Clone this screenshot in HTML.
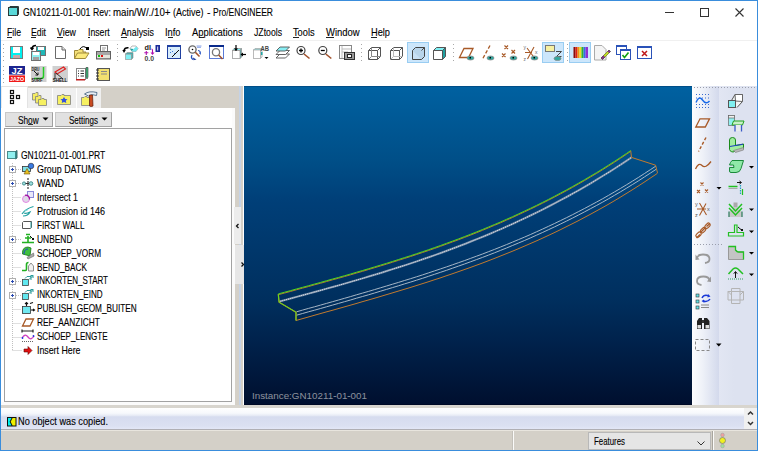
<!DOCTYPE html>
<html><head><meta charset="utf-8">
<style>
*{margin:0;padding:0;box-sizing:border-box}
html,body{width:758px;height:451px;overflow:hidden;background:#fff;font-family:"Liberation Sans",sans-serif}
.a{position:absolute}
.t{position:absolute;white-space:pre;transform-origin:0 0;-webkit-text-stroke:0.12px currentColor;font-family:"Liberation Sans",sans-serif}
svg{position:absolute;overflow:visible}
</style></head><body>
<div class="a" style="left:0;top:0;width:758px;height:451px;background:#fff"></div>
<!-- menu separator -->
<div class="a" style="left:1px;top:40px;width:756px;height:1px;background:#f0f0f0"></div>
<!-- tab strip gray -->
<div class="a" style="left:1px;top:86px;width:243px;height:22px;background:#d4d0c8"></div>
<!-- active tab -->
<div class="a" style="left:1px;top:86px;width:27px;height:24px;background:#fff;border-top:1px solid #e3e3e3;border-left:1px solid #ececec;border-right:1px solid #e3e3e3"></div>
<div class="a" style="left:28px;top:88px;width:24px;height:20px;background:#efefef"></div>
<div class="a" style="left:52px;top:88px;width:24px;height:20px;background:#efefef;border-left:1px solid #fff"></div>
<div class="a" style="left:76px;top:88px;width:25px;height:20px;background:#efefef;border-left:1px solid #fff"></div>
<!-- left panel white below tabs -->
<div class="a" style="left:1px;top:108px;width:233px;height:298px;background:#fff"></div>
<!-- buttons -->
<div class="a" style="left:5px;top:112px;width:48px;height:15px;background:#e1e1e1;border:1px solid #c8c8c8;border-right-color:#a0a0a0;border-bottom-color:#a0a0a0"></div>
<div class="a" style="left:55px;top:112px;width:57px;height:15px;background:#e1e1e1;border:1px solid #c8c8c8;border-right-color:#a0a0a0;border-bottom-color:#a0a0a0"></div>
<!-- tree box -->
<div class="a" style="left:4px;top:128px;width:228px;height:274px;background:#fff;border:1px solid #a2a2a2"></div>
<!-- panel right strip / splitter -->
<div class="a" style="left:232px;top:108px;width:12px;height:298px;background:#d4d0c8"></div>
<div class="a" style="left:232px;top:108px;width:3px;height:297px;background:#fbfbfb"></div><div class="a" style="left:1px;top:402px;width:234px;height:3px;background:#fbfbfb"></div>
<div class="a" style="left:239px;top:86px;width:2px;height:320px;background:#c4d2e6"></div>
<div class="a" style="left:243px;top:86px;width:1px;height:320px;background:#fff"></div>
<div class="a" style="left:234px;top:207px;width:7px;height:37px;background:#ececec"></div>
<div class="a" style="left:235px;top:245px;width:9px;height:39px;background:#e6e6e6"></div>
<!-- viewport -->
<div class="a" style="left:244px;top:86px;width:448px;height:319px;background:linear-gradient(#0061a1,#004f88 23%,#003f78 36%,#002f5e 67%,#00224c 80%,#000f2e)"></div>
<div class="a" style="left:244px;top:86px;width:448px;height:1px;background:#004e88"></div><div class="a" style="left:244px;top:404px;width:448px;height:1px;background:#000a26"></div>
<svg class="a" width="758" height="451" style="left:0;top:0">
<g fill="none" stroke-linejoin="round">
<polyline points="279.5,301.5 285.5,299.9 291.5,298.3 297.5,296.6 303.5,295.0 309.5,293.4 315.5,291.7 321.5,290.1 327.5,288.4 333.5,286.8 339.5,285.1 345.5,283.4 351.5,281.6 357.5,279.9 363.5,278.1 369.5,276.3 375.5,274.5 381.5,272.7 387.5,270.8 393.5,268.9 399.5,267.0 405.5,265.1 411.5,263.1 417.5,261.1 423.5,259.0 429.5,257.0 435.5,254.9 441.5,252.7 447.5,250.5 453.5,248.3 459.5,246.0 465.5,243.7 471.5,241.3 477.5,238.9 483.5,236.5 489.5,234.0 495.5,231.4 501.5,228.8 507.5,226.2 513.5,223.5 519.5,220.7 525.5,217.9 531.5,215.0 537.5,212.1 543.5,209.1 549.5,206.0 555.5,202.9 561.5,199.7 567.5,196.5 573.5,193.2 579.5,189.8 585.5,186.3 591.5,182.8 597.5,179.2 603.5,175.5 609.5,171.8 615.5,168.0 621.5,164.1 627.5,160.1 631.5,157.4" stroke="#7d90a8" stroke-width="2"/>
<polyline points="279.5,301.5 285.5,299.9 291.5,298.3 297.5,296.6 303.5,295.0 309.5,293.4 315.5,291.7 321.5,290.1 327.5,288.4 333.5,286.8 339.5,285.1 345.5,283.4 351.5,281.6 357.5,279.9 363.5,278.1 369.5,276.3 375.5,274.5 381.5,272.7 387.5,270.8 393.5,268.9 399.5,267.0 405.5,265.1 411.5,263.1 417.5,261.1 423.5,259.0 429.5,257.0 435.5,254.9 441.5,252.7 447.5,250.5 453.5,248.3 459.5,246.0 465.5,243.7 471.5,241.3 477.5,238.9 483.5,236.5 489.5,234.0 495.5,231.4 501.5,228.8 507.5,226.2 513.5,223.5 519.5,220.7 525.5,217.9 531.5,215.0 537.5,212.1 543.5,209.1 549.5,206.0 555.5,202.9 561.5,199.7 567.5,196.5 573.5,193.2 579.5,189.8 585.5,186.3 591.5,182.8 597.5,179.2 603.5,175.5 609.5,171.8 615.5,168.0 621.5,164.1 627.5,160.1 631.5,157.4" stroke="#d8e0e8" stroke-width="1" stroke-dasharray="1.2,1"/>
<polyline points="296.5,311.8 302.5,310.1 308.5,308.4 314.5,306.8 320.5,305.1 326.5,303.4 332.5,301.7 338.5,300.0 344.5,298.3 350.5,296.6 356.5,294.8 362.5,293.1 368.5,291.4 374.5,289.6 380.5,287.8 386.5,286.0 392.5,284.2 398.5,282.4 404.5,280.5 410.5,278.7 416.5,276.8 422.5,274.9 428.5,272.9 434.5,270.9 440.5,268.9 446.5,266.9 452.5,264.8 458.5,262.7 464.5,260.6 470.5,258.4 476.5,256.2 482.5,254.0 488.5,251.7 494.5,249.4 500.5,247.0 506.5,244.6 512.5,242.1 518.5,239.6 524.5,237.1 530.5,234.5 536.5,231.8 542.5,229.1 548.5,226.3 554.5,223.5 560.5,220.6 566.5,217.7 572.5,214.7 578.5,211.6 584.5,208.5 590.5,205.3 596.5,202.1 602.5,198.8 608.5,195.4 614.5,191.9 620.5,188.4 626.5,184.8 632.5,181.1 638.5,177.4 644.5,173.5 650.5,169.6 656.0,166.0" stroke="#b8c4d0" stroke-width="0.9"/>
<polyline points="296.5,315.2 302.5,313.5 308.5,311.8 314.5,310.2 320.5,308.5 326.5,306.8 332.5,305.1 338.5,303.4 344.5,301.7 350.5,300.0 356.5,298.2 362.5,296.5 368.5,294.8 374.5,293.0 380.5,291.2 386.5,289.4 392.5,287.6 398.5,285.8 404.5,283.9 410.5,282.1 416.5,280.2 422.5,278.3 428.5,276.3 434.5,274.3 440.5,272.3 446.5,270.3 452.5,268.2 458.5,266.1 464.5,264.0 470.5,261.8 476.5,259.6 482.5,257.4 488.5,255.1 494.5,252.8 500.5,250.4 506.5,248.0 512.5,245.5 518.5,243.0 524.5,240.5 530.5,237.9 536.5,235.2 542.5,232.5 548.5,229.7 554.5,226.9 560.5,224.0 566.5,221.1 572.5,218.1 578.5,215.0 584.5,211.9 590.5,208.7 596.5,205.5 602.5,202.2 608.5,198.8 614.5,195.3 620.5,191.8 626.5,188.2 632.5,184.5 638.5,180.8 644.5,176.9 650.5,173.0 656.0,169.4" stroke="#b8c4d0" stroke-width="0.9"/>
<polyline points="296.0,320.5 302.0,318.8 308.0,317.1 314.0,315.4 320.0,313.7 326.0,312.0 332.0,310.4 338.0,308.7 344.0,307.0 350.0,305.3 356.0,303.6 362.0,301.8 368.0,300.1 374.0,298.4 380.0,296.6 386.0,294.8 392.0,293.0 398.0,291.2 404.0,289.4 410.0,287.6 416.0,285.7 422.0,283.8 428.0,281.9 434.0,279.9 440.0,278.0 446.0,275.9 452.0,273.9 458.0,271.8 464.0,269.7 470.0,267.6 476.0,265.4 482.0,263.2 488.0,260.9 494.0,258.6 500.0,256.2 506.0,253.8 512.0,251.4 518.0,248.9 524.0,246.3 530.0,243.7 536.0,241.1 542.0,238.4 548.0,235.6 554.0,232.8 560.0,229.9 566.0,226.9 572.0,223.9 578.0,220.9 584.0,217.7 590.0,214.5 596.0,211.2 602.0,207.9 608.0,204.5 614.0,201.0 620.0,197.4 626.0,193.7 632.0,190.0 638.0,186.2 644.0,182.3 650.0,178.3 656.0,174.3 657.5,173.2" stroke="#c27a2e" stroke-width="1"/>
<polyline points="630.7,150.6 631.5,157.4 655.6,165.2 657.5,172.9" stroke="#c27a2e" stroke-width="1"/>
<polyline points="278.3,294.7 284.3,293.1 290.3,291.5 296.3,289.8 302.3,288.2 308.3,286.6 314.3,284.9 320.3,283.3 326.3,281.6 332.3,279.9 338.3,278.3 344.3,276.6 350.3,274.9 356.3,273.1 362.3,271.4 368.3,269.6 374.3,267.8 380.3,266.0 386.3,264.2 392.3,262.3 398.3,260.4 404.3,258.5 410.3,256.6 416.3,254.6 422.3,252.6 428.3,250.6 434.3,248.5 440.3,246.4 446.3,244.2 452.3,242.0 458.3,239.8 464.3,237.5 470.3,235.2 476.3,232.8 482.3,230.4 488.3,227.9 494.3,225.4 500.3,222.9 506.3,220.2 512.3,217.6 518.3,214.8 524.3,212.0 530.3,209.2 536.3,206.3 542.3,203.3 548.3,200.3 554.3,197.2 560.3,194.0 566.3,190.8 572.3,187.5 578.3,184.1 584.3,180.7 590.3,177.1 596.3,173.6 602.3,169.9 608.3,166.1 614.3,162.3 620.3,158.4 626.3,154.4 630.7,151.4" stroke="#b8782e" stroke-width="1"/>
<polyline points="278.3,293.9 284.3,292.3 290.3,290.7 296.3,289.0 302.3,287.4 308.3,285.8 314.3,284.1 320.3,282.5 326.3,280.8 332.3,279.1 338.3,277.5 344.3,275.8 350.3,274.1 356.3,272.3 362.3,270.6 368.3,268.8 374.3,267.0 380.3,265.2 386.3,263.4 392.3,261.5 398.3,259.6 404.3,257.7 410.3,255.8 416.3,253.8 422.3,251.8 428.3,249.8 434.3,247.7 440.3,245.6 446.3,243.4 452.3,241.2 458.3,239.0 464.3,236.7 470.3,234.4 476.3,232.0 482.3,229.6 488.3,227.1 494.3,224.6 500.3,222.1 506.3,219.4 512.3,216.8 518.3,214.0 524.3,211.2 530.3,208.4 536.3,205.5 542.3,202.5 548.3,199.5 554.3,196.4 560.3,193.2 566.3,190.0 572.3,186.7 578.3,183.3 584.3,179.9 590.3,176.3 596.3,172.8 602.3,169.1 608.3,165.3 614.3,161.5 620.3,157.6 626.3,153.6 630.7,150.6" stroke="#50d820" stroke-width="1"/>
<polyline points="278.3,294.2 279.1,302.2 296,312.2 296,320.5" stroke="#c27a2e" stroke-width="1.3"/>
<polyline points="278.3,294.2 279.1,302.2 296,312.2 296,320.5" stroke="#5ee21a" stroke-width="1"/>
</g></svg>
<!-- right toolbar -->
<div class="a" style="left:692px;top:86px;width:27px;height:319px;background:linear-gradient(90deg,#fdfdfe,#eef1f8 40%,#d3d9ec)"></div>
<div class="a" style="left:719px;top:86px;width:38px;height:319px;background:linear-gradient(90deg,#e2e6f3,#dde2f0 40%,#dde2f0)"></div>
<!-- bottom strip -->
<div class="a" style="left:1px;top:405px;width:756px;height:3px;background:#d8d5ce"></div>
<!-- message area -->
<div class="a" style="left:1px;top:408px;width:756px;height:21px;background:linear-gradient(#ffffff,#f6f8fc 25%,#e6eaf5 36%,#d6dcef 42%,#dbe0f1 85%,#e3e7f6)"></div>
<div class="a" style="left:744px;top:408px;width:13px;height:21px;background:#f0f0f0"></div>
<!-- status bar -->
<div class="a" style="left:1px;top:429px;width:756px;height:21px;background:#d4d0c8;border-top:1px solid #b0afb4"></div><div class="a" style="left:1px;top:430px;width:756px;height:1px;background:#e8e5de"></div>
<div class="a" style="left:512px;top:431px;width:1px;height:19px;background:#c4c1ba"></div><div class="a" style="left:513px;top:431px;width:1px;height:19px;background:#fbfbfa"></div>
<div class="a" style="left:588px;top:432px;width:123px;height:18px;background:#e5e5e5;border:1px solid #b8b8b8"></div>
<div class="a" style="left:712px;top:431px;width:1px;height:19px;background:#a8a59e"></div><div class="a" style="left:713px;top:431px;width:1px;height:19px;background:#fbfbfa"></div>
<!-- window border -->
<div class="a" style="left:0;top:0;width:758px;height:451px;border:1px solid #3a8ddc"></div>
<svg class="a" width="758" height="451" style="left:0;top:0">
<!-- window title icon -->
<rect x="8.5" y="7.5" width="9" height="8" fill="#5ad8d8" stroke="#2a3a3a"/>
<path d="M9 7.5 L10 6.5 L18.5 6.5 L18.5 14.5 L17.5 15.5" fill="none" stroke="#2a3a3a"/>
<!-- title buttons -->
<rect x="665" y="12" width="9" height="1" fill="#333"/>
<rect x="700.5" y="8.5" width="8" height="8" fill="none" stroke="#333"/>
<path d="M735.5 8.5 L743.5 16.5 M743.5 8.5 L735.5 16.5" stroke="#333" stroke-width="1.1"/>
<!-- grip dots row1/row2 left -->
<g fill="#a8a8a8" transform="translate(1,0)">
<rect x="2" y="44" width="1" height="1"/><rect x="2" y="48" width="1" height="1"/><rect x="2" y="52" width="1" height="1"/><rect x="2" y="56" width="1" height="1"/><rect x="2" y="60" width="1" height="1"/>
<rect x="2" y="66" width="1" height="1"/><rect x="2" y="70" width="1" height="1"/><rect x="2" y="74" width="1" height="1"/><rect x="2" y="78" width="1" height="1"/><rect x="2" y="82" width="1" height="1"/>
<rect x="116" y="44" width="1" height="1"/><rect x="116" y="48" width="1" height="1"/><rect x="116" y="52" width="1" height="1"/><rect x="116" y="56" width="1" height="1"/><rect x="116" y="60" width="1" height="1"/>
<rect x="360" y="44" width="1" height="1"/><rect x="360" y="48" width="1" height="1"/><rect x="360" y="52" width="1" height="1"/><rect x="360" y="56" width="1" height="1"/><rect x="360" y="60" width="1" height="1"/>
<rect x="452" y="44" width="1" height="1"/><rect x="452" y="48" width="1" height="1"/><rect x="452" y="52" width="1" height="1"/><rect x="452" y="56" width="1" height="1"/><rect x="452" y="60" width="1" height="1"/>
<rect x="566" y="44" width="1" height="1"/><rect x="566" y="48" width="1" height="1"/><rect x="566" y="52" width="1" height="1"/><rect x="566" y="56" width="1" height="1"/><rect x="566" y="60" width="1" height="1"/>

</g>
<g fill="#222"><rect x="7" y="37" width="5" height="1"/><rect x="31" y="37" width="5" height="1"/><rect x="57" y="37" width="6" height="1"/><rect x="88" y="37" width="2" height="1"/><rect x="121" y="37" width="6" height="1"/><rect x="168" y="37" width="5" height="1"/><rect x="199" y="37" width="5" height="1"/><rect x="293" y="37" width="6" height="1"/><rect x="326" y="37" width="8" height="1"/><rect x="371" y="37" width="6" height="1"/></g>
<!-- save -->
<rect x="10.5" y="46.5" width="12" height="12" fill="#00f0f0" stroke="#7a7a7a"/>
<rect x="13" y="47" width="7" height="6" fill="#fff"/>
<rect x="13" y="55" width="7" height="3" fill="#c8a8a8"/>
<!-- save copy -->
<rect x="36.5" y="46.5" width="9" height="9" fill="#20b8b8" stroke="#707070"/>
<rect x="38" y="47" width="6" height="3" fill="#fff"/>
<rect x="31.5" y="51.5" width="9" height="9" fill="#90f0f0" stroke="#707070"/>
<rect x="33" y="52" width="6" height="3" fill="#fff"/>
<rect x="33" y="57" width="6" height="3" fill="#a0a0a0"/>
<path d="M36 45.5 Q32 45.5 32 49 M30.5 47.5 L32 49.5 L33.5 47.5" fill="none" stroke="#000" stroke-width="1.5"/>
<!-- new -->
<path d="M55.5 46.5 H62 L65.5 50 V58.5 H55.5 Z" fill="#fff" stroke="#6a6a6a"/>
<path d="M62 46.5 V50 H65.5" fill="#ddd" stroke="#6a6a6a"/>
<!-- open -->
<path d="M74.5 50.5 H78 L79 49.5 H83 V52 H86 L83 58.5 H74.5 Z" fill="#f6e27a" stroke="#a08a3a"/>
<path d="M74.5 58.5 L77.5 53 H89 L85.5 58.5 Z" fill="#fbe97c" stroke="#a08a3a"/>
<path d="M80 49 Q83 44.5 87 48.5" fill="none" stroke="#000" stroke-width="1"/>
<rect x="86" y="47" width="3" height="3" fill="#000"/>
<!-- print -->
<rect x="100.5" y="45.5" width="7" height="7" fill="#fff" stroke="#707070"/><path d="M102 48 H106 M102 50 H105" stroke="#999"/>
<rect x="96.5" y="51.5" width="14" height="7.5" fill="#a8a8a8" stroke="#606060"/>
<rect x="97" y="55" width="13" height="3" fill="#e4e4dc"/>
<rect x="98" y="55" width="2" height="2" fill="#10c010"/><rect x="101" y="55" width="2" height="2" fill="#e01010"/>
<!-- spin -->
<path d="M128.5 47.8 Q124.5 47.5 124 50.5" fill="none" stroke="#000" stroke-width="1.5"/>
<path d="M122.3 50 L124 53 L125.8 50 Z" fill="#000"/>
<path d="M130 48.5 L132 46 H136 L138 48.5 L136 51.5 H132 Z" fill="#fff" stroke="#999" stroke-width="0.7"/>
<path d="M130 48.5 L133.5 49 L132 51.5 Z" fill="#20a0a0"/>
<path d="M133.5 49 L136.2 46.5 L138 48.5 L136 51.5 H132 Z" fill="#70e8f0"/>
<rect x="125.5" y="54" width="6" height="5.5" fill="#80f0f4" stroke="#999" stroke-width="0.7"/>
<path d="M125.5 54 L127 52.5 H133 V58 L131.5 59.5 V54 Z" fill="#30b0b0" stroke="#999" stroke-width="0.7"/>
<!-- d1 0.0 -->
<text x="144.5" y="50.3" font-family="Liberation Sans" font-size="7" font-weight="bold" fill="#222" textLength="6.5" lengthAdjust="spacingAndGlyphs">dl</text>
<path d="M146.3 55 V51 M144.3 52.8 H148.3 M151.5 49 Q152.5 49 152.5 50.5 V54" fill="none" stroke="#b010b0" stroke-width="1.1"/>
<path d="M150.5 52.5 L152.5 55 L154.5 52.5 Z" fill="#b010b0"/>
<text x="144.5" y="60.5" font-family="Liberation Sans" font-size="7" font-weight="bold" fill="#444" textLength="9.5" lengthAdjust="spacingAndGlyphs">0.0</text>
<rect x="155.5" y="45" width="4.5" height="7" fill="#1a2a9a"/>
<path d="M157.7 46.5 V50.5" stroke="#fff" stroke-width="0.9"/>
<!-- blue window -->
<rect x="167.5" y="45.5" width="13" height="13" fill="#d8ecfb" stroke="#2040a0"/>
<rect x="167" y="45" width="14" height="2" fill="#2040a0"/>
<path d="M172 57 L179 50" stroke="#111" stroke-width="1"/>
<path d="M170 49 l1 1 M172 51 l1 1 M170 52 l1 1 M174 53 l1 1" stroke="#3a7ad8" stroke-width="1"/>
<!-- zoom rotate -->
<circle cx="192.5" cy="49.5" r="3.6" fill="#fff" stroke="#6a6a6a" stroke-width="1.4"/>
<circle cx="192.5" cy="49.5" r="0.8" fill="#000"/>
<path d="M195.3 52.3 L199.5 56.5" stroke="#a0502a" stroke-width="1.6"/>
<path d="M198 50.5 Q201 51 200 53.5" fill="none" stroke="#2050c0" stroke-width="1.2"/>
<path d="M199 53 L201 55 L200.5 52.5 Z" fill="#2050c0"/>
<path d="M192 55 Q190.5 58 193 59.5" fill="none" stroke="#2050c0" stroke-width="1.3"/>
<path d="M193 57.5 L196.5 59.5 L193.5 60.3 Z" fill="#1a3aa0"/>
<path d="M196.5 46 H201.5 M197 47.3 H201" stroke="#6a8ae0" stroke-width="0.8"/>
<!-- window zoom -->
<rect x="209.5" y="45.5" width="14" height="13" fill="#fff" stroke="#5a7ad8"/>
<rect x="209" y="45" width="15" height="2" fill="#0a2a8a"/>
<circle cx="216" cy="52.3" r="3.6" fill="#fff" stroke="#777" stroke-width="1.3"/>
<path d="M218.6 55 L222.5 59" stroke="#a0502a" stroke-width="1.5"/>
<!-- box arrows -->
<path d="M232.5 50.5 L234 48.5 H241.5 L240 50.5 Z" fill="#80f0f4" stroke="#999" stroke-width="0.8"/>
<path d="M240 50.5 L241.5 48.5 V57 L240 58.5 Z" fill="#20a8a8" stroke="#999" stroke-width="0.8"/>
<rect x="232.5" y="50.5" width="7.5" height="8" fill="#fff" stroke="#999" stroke-width="0.8"/>
<path d="M236 45 V50.5" stroke="#000" stroke-width="1.2"/><path d="M234 48.5 L236 51 L238 48.5 Z" fill="#000"/>
<path d="M246 54.5 H241" stroke="#000" stroke-width="1.2"/><path d="M243 52.5 L240.5 54.5 L243 56.5 Z" fill="#000"/>
<!-- box AB -->
<path d="M253.5 50 L255 48.5 H262 L260.5 50 Z" fill="#80f0f4" stroke="#aaa" stroke-width="0.8"/>
<path d="M260.5 50 L262 48.5 V57 L260.5 58.5 Z" fill="#e8f4f4" stroke="#aaa" stroke-width="0.8"/>
<rect x="253.5" y="50" width="7" height="8.5" fill="#fff" stroke="#aaa" stroke-width="0.8"/>
<rect x="261" y="52" width="1.5" height="3" fill="#20a8a8"/>
<text x="260.5" y="50.5" font-family="Liberation Sans" font-size="6.5" font-weight="bold" fill="#444" textLength="8.5" lengthAdjust="spacingAndGlyphs">AB</text>
<path d="M264.5 57 H268.5 L266.5 59 Z" fill="#000"/>
<!-- layers -->
<path d="M276 58 L280 54 H289.5 L285.5 58 Z" fill="#fff" stroke="#555" stroke-width="0.9"/>
<path d="M276 54.5 L280 50.5 H289.5 L285.5 54.5 Z" fill="#fff" stroke="#555" stroke-width="0.9"/>
<path d="M276 51 L280 47 H289.5 L285.5 51 Z" fill="#88eef4" stroke="#555" stroke-width="0.9"/>
<!-- zoom in/out -->
<circle cx="301" cy="50.5" r="4" fill="#fff" stroke="#444" stroke-width="1.2"/>
<path d="M299 50.5 H303 M301 48.5 V52.5" stroke="#000" stroke-width="1.3"/>
<path d="M304 54 L309.5 58.5" stroke="#a0502a" stroke-width="1.6"/>
<circle cx="322.8" cy="50.5" r="4" fill="#fff" stroke="#444" stroke-width="1.2"/>
<path d="M320.8 50.5 H324.8" stroke="#000" stroke-width="1.3"/>
<path d="M325.8 54 L331.3 58.5" stroke="#a0502a" stroke-width="1.6"/>
<!-- doc camera -->
<rect x="339.5" y="45.5" width="12" height="13" fill="#fff" stroke="#888"/>
<path d="M342 46 V58 M342 49 H351 M342 52 H348" stroke="#bbb"/>
<rect x="344.5" y="52.5" width="10" height="7" fill="#9a9a9a" stroke="#333"/>
<rect x="347.5" y="54.5" width="4" height="3" fill="#fff" stroke="#222"/>
</svg>
<svg class="a" width="758" height="451" style="left:0;top:0">
<!-- cubes -->
<g fill="none" stroke="#555" stroke-width="1">
<path d="M368.5 50.5 H377.5 V59.5 H368.5 Z M368.5 50.5 L371.5 47.5 H380.5 V56.5 L377.5 59.5 M377.5 50.5 L380.5 47.5"/>
<path d="M371.5 47.5 V56.5 H380.5 M368.5 59.5 L371.5 56.5" stroke="#888"/>
<path d="M390.5 50.5 H399.5 V59.5 H390.5 Z M390.5 50.5 L393.5 47.5 H402.5 V56.5 L399.5 59.5 M399.5 50.5 L402.5 47.5"/>
<path d="M393.5 47.5 V56.5 H402.5 M390.5 59.5 L393.5 56.5" stroke="#bbb"/>
</g>
<rect x="407.5" y="42.5" width="21" height="20" fill="#cce6fb" stroke="#99cdf2"/>
<path d="M412.5 50.5 H421.5 V59.5 H412.5 Z" fill="#c8e0f4" stroke="#444"/>
<path d="M412.5 50.5 L415.5 47.5 H424.5 V56.5 L421.5 59.5 M421.5 50.5 L424.5 47.5" fill="#b8d4ea" stroke="#444"/>
<path d="M433.5 50.5 H442.5 V59.5 H433.5 Z" fill="#fff" stroke="#555"/>
<path d="M433.5 50.5 L436.5 47.5 H445.5 L442.5 50.5 Z" fill="#80f0f4" stroke="#555"/>
<path d="M442.5 50.5 L445.5 47.5 V56.5 L442.5 59.5 Z" fill="#20a0a0" stroke="#555"/>
<!-- datum plane -->
<path d="M459.5 57.5 L464 48.5 H473 L468.5 57.5 Z" fill="none" stroke="#a85a28" stroke-width="1.3"/>
<g fill="#30a8a0" stroke="#8a8a8a" stroke-width="0.8"><ellipse cx="470.5" cy="58" rx="3.5" ry="2"/></g>
<rect x="469.5" y="57" width="1.5" height="1.5" fill="#000"/>
<!-- axis -->
<path d="M490 45.5 L482 60" stroke="#a85a28" stroke-width="1.3" stroke-dasharray="3.5,2"/>
<ellipse cx="490.5" cy="58" rx="3.5" ry="2" fill="#30a8a0" stroke="#8a8a8a" stroke-width="0.8"/>
<rect x="489.5" y="57" width="1.5" height="1.5" fill="#000"/>
<!-- points -->
<path d="M504.5 45.5 l3.5 3.5 m0 -3.5 l-3.5 3.5 M511.5 50 l3.5 3.5 m0 -3.5 l-3.5 3.5 M502 53.5 l3.5 3.5 m0 -3.5 l-3.5 3.5" stroke="#a85a28" stroke-width="1.2"/>
<ellipse cx="513.5" cy="58" rx="3.5" ry="2" fill="#30a8a0" stroke="#8a8a8a" stroke-width="0.8"/>
<rect x="512.5" y="57" width="1.5" height="1.5" fill="#000"/>
<!-- csys -->
<path d="M525 52.5 H532 M527 48 L534.5 58 M534 47 L527.5 59" stroke="#a85a28" stroke-width="1.1"/>
<text x="523.5" y="49" font-family="Liberation Sans" font-size="5" fill="#666">y</text>
<text x="523.5" y="60.5" font-family="Liberation Sans" font-size="5" fill="#666">z</text>
<text x="535" y="54" font-family="Liberation Sans" font-size="5" fill="#666">x</text>
<ellipse cx="534.5" cy="58" rx="3.5" ry="2" fill="#30a8a0" stroke="#8a8a8a" stroke-width="0.8"/>
<rect x="533.5" y="57" width="1.5" height="1.5" fill="#000"/>
<!-- spin center highlight -->
<rect x="542.5" y="42.5" width="21" height="20" fill="#cce6fb" stroke="#99cdf2"/>
<rect x="545.5" y="45.5" width="9" height="6" fill="#f6f0a0" stroke="#777"/>
<path d="M556 51.5 H561.5 L556.5 56.5 H561.5" fill="none" stroke="#444" stroke-width="1"/>
<ellipse cx="557.5" cy="58.5" rx="3.5" ry="2" fill="#30a8a0" stroke="#8a8a8a" stroke-width="0.8"/>
<!-- color bars highlight -->
<rect x="569.5" y="42.5" width="21" height="20" fill="#cce6fb" stroke="#99cdf2"/>
<rect x="573.5" y="47" width="2" height="11" fill="#8a0a0a"/>
<rect x="575.5" y="47" width="2" height="11" fill="#e02010"/>
<rect x="577.5" y="47" width="2" height="11" fill="#f09010"/>
<rect x="579.5" y="47" width="2" height="11" fill="#f0e020"/>
<rect x="581.5" y="47" width="2" height="11" fill="#30b030"/>
<rect x="583.5" y="47" width="2" height="11" fill="#3070e0"/>
<rect x="585.5" y="47" width="2.5" height="11" fill="#9030d0"/>
<!-- pencil doc -->
<path d="M594.5 45.5 H602 L606 49.5 V60 H594.5 Z" fill="#f4f4f4" stroke="#aaa"/>
<path d="M601 58 L609 50 L610.5 51.5 L602.5 59.5 Z" fill="#8a2a8a" stroke="#222" stroke-width="0.6"/>
<path d="M603.5 55.5 L607.5 51.5 L609 53 L605 57 Z" fill="#c0e020"/>
<!-- windows check -->
<rect x="616.5" y="45.5" width="10" height="9" fill="#fff" stroke="#2a52b8"/>
<rect x="616" y="45" width="11" height="2" fill="#2a52b8"/>
<rect x="620.5" y="49.5" width="10" height="10" fill="#fff" stroke="#2a52b8"/>
<rect x="620" y="49" width="11" height="2" fill="#2a52b8"/>
<path d="M622.5 55 L624.5 57.5 L628.5 52.5" fill="none" stroke="#10a010" stroke-width="1.6"/>
<!-- window x -->
<rect x="637.5" y="46.5" width="14" height="12" fill="#fff" stroke="#2a52b8"/>
<rect x="637" y="46" width="15" height="2" fill="#2a52b8"/>
<path d="M642 51 L647 56 M647 51 L642 56" stroke="#c01818" stroke-width="1.5"/>
<!-- row 2 -->
<rect x="9" y="66" width="16" height="9" fill="#1c2590"/>
<text x="11.5" y="74" font-family="Liberation Sans" font-size="8.5" font-weight="bold" fill="#fff" textLength="11" lengthAdjust="spacingAndGlyphs">JZ</text>
<rect x="9" y="75" width="16" height="7" fill="#f01818"/><rect x="9" y="74.6" width="16" height="0.8" fill="#fff"/>
<text x="10" y="81.3" font-family="Liberation Sans" font-size="6" font-weight="bold" fill="#fff" textLength="14" lengthAdjust="spacingAndGlyphs">JAZO</text>
<rect x="31" y="66" width="15.5" height="16" fill="#d0d0d0"/>
<path d="M43.5 67 V76 Q43.5 78.5 41 78.5 H34" fill="none" stroke="#22cc22" stroke-width="1.5"/>
<text x="31.5" y="70.5" font-family="Liberation Sans" font-size="4.5" font-weight="bold" fill="#222" textLength="8" lengthAdjust="spacingAndGlyphs">DRU</text>
<path d="M34 71 L38 75 M38 72.5 V75 H35.5" fill="none" stroke="#111" stroke-width="1"/>
<text x="31.5" y="81.5" font-family="Liberation Sans" font-size="4.8" font-weight="bold" fill="#222" textLength="11" lengthAdjust="spacingAndGlyphs">SURF</text>
<rect x="52.5" y="66" width="15.5" height="16" fill="#d0d0d0"/>
<path d="M55 72 L63.5 67 L65.5 69 L57 74 Z" fill="none" stroke="#e02020" stroke-width="1.2"/>
<path d="M56 73 L63 79 M55 73 V79" stroke="#333" stroke-width="1"/>
<text x="52.8" y="81.5" font-family="Liberation Sans" font-size="4.8" font-weight="bold" fill="#111" textLength="14.5" lengthAdjust="spacingAndGlyphs">SHELL</text>
<rect x="76.5" y="68.5" width="9" height="11" fill="#fff" stroke="#888"/>
<path d="M78 71 H79 M80.5 71 H84 M78 73.5 H79 M80.5 73.5 H84 M78 76 H79 M80.5 76 H84" stroke="#333"/>
<rect x="76" y="79" width="9" height="1.5" fill="#c02020"/>
<path d="M86 67.5 V77 L87 79 L88 77 V67.5 Z" fill="#40c080" stroke="#333" stroke-width="0.6"/>
<rect x="97.5" y="68.5" width="12" height="12" fill="#f2e070" stroke="#555"/>
<path d="M101 71.5 H107 M101 74 H107" stroke="#888"/>
<path d="M96 70 H99 M96 73 H99 M96 76 H99 M96 79 H99" stroke="#333"/>
</svg>
<svg class="a" width="758" height="451" style="left:0;top:0">
<!-- tab icons -->
<g fill="#fff" stroke="#111" stroke-width="1.2">
<rect x="10.5" y="90.5" width="3" height="3"/><rect x="10.5" y="95.5" width="3" height="3"/><rect x="16.5" y="95.5" width="3" height="3"/><rect x="10.5" y="100.5" width="3" height="3"/>
</g>
<g stroke="#808080" stroke-width="0.8">
<path d="M32.5 93.5 H35 L36 92.5 H38 V100 H32.5 Z" fill="#f4ec60"/>
<path d="M35.5 96.5 H38 L39 95.5 H41 V103 H35.5 Z" fill="#f4ec60"/>
<path d="M38.5 99.5 H41 L42 98.5 H44 V99.5 H46.5 V105.5 H38.5 Z" fill="#f6f060"/>
<path d="M57.5 95.5 H61 L62 94.5 H64 V95.5 H70.5 V104.5 H57.5 Z" fill="#f6f060"/>
<path d="M81.5 97.5 H84 L85 96.5 H87 V97.5 H90 V105.5 H81.5 Z" fill="#f6f060"/>
</g>
<path d="M64 97 L65.2 99 L67.5 99.3 L65.8 100.8 L66.3 103 L64 102 L61.7 103 L62.2 100.8 L60.5 99.3 L62.8 99 Z" fill="#3050e0"/>
<path d="M84.5 94 Q89 90.5 97 92.5 L96.5 95.5 Q92 93.5 88.5 96 Z" fill="#e8eef4" stroke="#3a5a7a" stroke-width="0.8"/>
<path d="M89.5 95 L92.5 95 L93 106 Q91 107 89.5 106 Z" fill="#c84a20" stroke="#5a1a08" stroke-width="0.7"/>
<rect x="28" y="124" width="5" height="1" fill="#333"/>
<!-- show/settings arrows -->
<path d="M42.5 117.5 H48.5 L45.5 120.5 Z M101.5 117.5 H107.5 L104.5 120.5 Z" fill="#000"/>
<!-- tree lines -->
<g stroke="#c0c0c0" stroke-width="1" stroke-dasharray="1,1">
<path d="M12.5 163 V350.5"/>
<path d="M16 169.5 H21 M16 183.5 H21 M12.5 197.5 H21 M12.5 211.5 H21 M12.5 225.5 H21 M16 239.5 H21 M12.5 253.5 H21 M12.5 267.5 H21 M16 281.5 H21 M16 295.5 H21 M12.5 309.5 H21 M12.5 323.5 H21 M12.5 337.5 H21 M12.5 350.5 H22"/>
</g>
<g fill="#fff" stroke="#b0b0b0">
<rect x="9.5" y="166.5" width="6" height="6"/><rect x="9.5" y="180.5" width="6" height="6"/><rect x="9.5" y="236.5" width="6" height="6"/><rect x="9.5" y="278.5" width="6" height="6"/><rect x="9.5" y="292.5" width="6" height="6"/>
</g>
<path d="M11 169.5 H14 M12.5 168 V171 M11 183.5 H14 M12.5 182 V185 M11 239.5 H14 M12.5 238 V241 M11 281.5 H14 M12.5 280 V283 M11 295.5 H14 M12.5 294 V297" stroke="#2a4ab0" stroke-width="1"/>
<!-- root icon -->
<rect x="7.5" y="151.5" width="8" height="7" fill="#90f0f0" stroke="#4a8a8a"/>
<path d="M15.5 151.5 L17 150.5 V158 L15.5 159" fill="#2a8a8a" stroke="#3a6a6a"/>
<!-- group datums -->
<rect x="22.5" y="166.5" width="8" height="5" fill="#80e0e8" stroke="#333" stroke-width="0.8"/>
<circle cx="31" cy="166" r="2.8" fill="#3a7ae0" stroke="#223" stroke-width="0.6"/>
<path d="M27 168.5 L30 174 L24 174 Z" fill="#e8c020" stroke="#6a5010" stroke-width="0.6"/>
<!-- wand -->
<circle cx="24" cy="183.5" r="1.6" fill="#a0e0e0" stroke="#2a7a7a" stroke-width="0.8"/>
<circle cx="31" cy="183.5" r="1.8" fill="#a0e0e0" stroke="#2a7a7a" stroke-width="0.8"/>
<path d="M28 178 V190" stroke="#111" stroke-dasharray="2,1"/>
<path d="M25.5 183.5 H29" stroke="#333"/>
<!-- intersect -->
<rect x="27.5" y="191.5" width="6" height="6" fill="#e8e8f8" stroke="#8a8ad8"/>
<circle cx="26" cy="199" r="3.5" fill="#e0d8e8" stroke="#e070e0" stroke-width="0.8"/>
<path d="M25 195.3 A3.7 3.7 0 0 1 29.5 199.5" fill="none" stroke="#a010a0" stroke-width="1.3"/>
<!-- protrusion -->
<path d="M22 214 Q25 209 33.5 206.5 M23 216 Q28 216 30 212 Q26 214 24 213" fill="none" stroke="#20a0a0" stroke-width="1.2"/>
<path d="M24.5 211 L28 209.5" stroke="#70d0d0" stroke-width="1.3"/>
<!-- first wall -->
<path d="M22.5 222.5 L23.5 221.5 H31.5 V227.5 L30.5 228.5 H22.5 Z" fill="#fff" stroke="#555"/>
<path d="M30.5 222.5 L31.5 221.5 V227.5 L30.5 228.5 Z" fill="#30a0a0"/>
<!-- unbend -->
<path d="M22 242.5 H34 M28 242.5 V236 M25 238 H31 M26 234.5 H30" stroke="#22b022" stroke-width="1.6" fill="none"/>
<path d="M30 236 L33 239" stroke="#111" stroke-width="1"/><rect x="32" y="238" width="2" height="2" fill="#111"/>
<!-- schoep vorm -->
<path d="M22.5 254 Q22 247 28 247 L31 248 L30 256 Z" fill="#40c040" stroke="#117711" stroke-width="0.8"/>
<path d="M24 254 Q24 249 28 249" fill="none" stroke="#2040d0" stroke-width="1"/>
<path d="M27 257.5 L33.5 253 L34 256 L28 259 Z" fill="#aaa" stroke="#666" stroke-width="0.6"/>
<!-- bend back -->
<path d="M22 270.5 H25.5 Q26.5 270.5 26.5 269 V264.5 Q26.5 262.5 28.5 262.5" fill="none" stroke="#22b022" stroke-width="1.6"/>
<path d="M28.5 271 V266 L31 263 L33.5 266 V271 Z" fill="#f0f0f0" stroke="#777" stroke-width="0.8"/>
<!-- inkorten -->
<g>
<rect x="22.5" y="279.5" width="6" height="6" fill="#60e8f0" stroke="#444" stroke-width="0.8"/>
<path d="M25 278.5 L27 276.5 H31 V280 M29 279.5 L33 275.5 M30.5 275.5 H33 V278" fill="none" stroke="#2a9a9a" stroke-width="1"/>
<rect x="22.5" y="293.5" width="6" height="6" fill="#60e8f0" stroke="#444" stroke-width="0.8"/>
<path d="M25 292.5 L27 290.5 H31 V294 M29 293.5 L33 289.5 M30.5 289.5 H33 V292" fill="none" stroke="#2a9a9a" stroke-width="1"/>
</g>
<!-- publish -->
<rect x="22.5" y="306.5" width="8" height="7" fill="#70e8f0" stroke="#333" stroke-width="0.8"/>
<path d="M26.5 306 V302.5 M25 304 L26.5 302.5 L28 304 M30 303.5 L33 302.5 M31 310 H34 M33 309 L34.5 310 L33 311" fill="none" stroke="#111" stroke-width="1.1"/>
<!-- ref aanzicht -->
<path d="M22.5 326 L26 319 H33.5 L30 326 Z" fill="none" stroke="#a85a28" stroke-width="1.3"/>
<!-- schoep lengte -->
<path d="M22 331 H33 M22 329.5 V332.5 M33 329.5 V332.5" stroke="#222" stroke-width="1.2"/>
<path d="M22 338 Q25 333 28 337 Q31 341 34 336" fill="none" stroke="#d040c0" stroke-width="1.3"/>
<path d="M22 341.5 H34" stroke="#666" stroke-dasharray="1,1"/>
<circle cx="22.5" cy="338" r="0.9" fill="#2030e0"/><circle cx="33.5" cy="336" r="0.9" fill="#2030e0"/>
<!-- insert here arrow -->
<path d="M24 349 H28 V346.5 L32 350.5 L28 354.5 V352 H24 Z" fill="#e01010" stroke="#600" stroke-width="0.6"/>
<!-- splitter arrows -->
<path d="M238.5 224 L236.5 226 L238.5 228" fill="none" stroke="#111" stroke-width="1.3"/>
<path d="M241.5 262.5 L243.5 264.5 L241.5 266.5" fill="none" stroke="#111" stroke-width="1.3"/>
<!-- message icon -->
<rect x="7" y="417" width="9.5" height="9.5" fill="#111"/>
<path d="M8 418 H11.5 L9.6 421.7 L11.5 425.5 H8 Z" fill="#00f0f0"/>
<path d="M12.6 418 H15.5 V425.5 H12.6 L10.7 421.7 Z" fill="#f0f000"/>
<!-- scroll arrows -->
<path d="M748 414.5 L750.5 412 L753 414.5 M748 422 L750.5 424.5 L753 422" fill="none" stroke="#333" stroke-width="1.5"/>
<!-- combo chevron -->
<path d="M697.5 441.5 L701 445 L704.5 441.5" fill="none" stroke="#333" stroke-width="1"/>
<!-- traffic light -->
<circle cx="722.5" cy="435" r="1.8" fill="#f0a0a0" stroke="#999" stroke-width="0.5"/>
<circle cx="722.5" cy="440.5" r="3" fill="#f0f020" stroke="#777" stroke-width="0.7"/>
<circle cx="722.5" cy="446" r="1.8" fill="#a0e0a0" stroke="#999" stroke-width="0.5"/>
</svg>
<svg class="a" width="758" height="451" style="left:0;top:0">
<!-- top grip -->
<g fill="#9a9eac"><rect x="694" y="87" width="1" height="1"/><rect x="697" y="87" width="1" height="1"/><rect x="700" y="87" width="1" height="1"/><rect x="703" y="87" width="1" height="1"/><rect x="706" y="87" width="1" height="1"/><rect x="709" y="87" width="1" height="1"/><rect x="712" y="87" width="1" height="1"/><rect x="715" y="87" width="1" height="1"/><rect x="718" y="87" width="1" height="1"/><rect x="721" y="87" width="1" height="1"/><rect x="724" y="87" width="1" height="1"/><rect x="727" y="87" width="1" height="1"/><rect x="730" y="87" width="1" height="1"/><rect x="733" y="87" width="1" height="1"/><rect x="736" y="87" width="1" height="1"/><rect x="739" y="87" width="1" height="1"/><rect x="742" y="87" width="1" height="1"/><rect x="745" y="87" width="1" height="1"/><rect x="748" y="87" width="1" height="1"/><rect x="751" y="87" width="1" height="1"/><rect x="754" y="87" width="1" height="1"/><rect x="694" y="244" width="1" height="1"/><rect x="697" y="244" width="1" height="1"/><rect x="700" y="244" width="1" height="1"/><rect x="703" y="244" width="1" height="1"/><rect x="706" y="244" width="1" height="1"/><rect x="709" y="244" width="1" height="1"/><rect x="712" y="244" width="1" height="1"/><rect x="715" y="244" width="1" height="1"/><rect x="718" y="244" width="1" height="1"/><rect x="721" y="244" width="1" height="1"/></g>
<!-- sketch -->
<g fill="#3a6ad0"><rect x="696" y="94" width="1" height="1"/><rect x="696" y="97.5" width="1" height="1"/><rect x="696" y="104" width="1" height="1"/><rect x="696" y="107" width="1" height="1"/><rect x="699" y="94" width="1" height="1"/><rect x="699" y="97.5" width="1" height="1"/><rect x="699" y="104" width="1" height="1"/><rect x="699" y="107" width="1" height="1"/><rect x="702" y="94" width="1" height="1"/><rect x="702" y="97.5" width="1" height="1"/><rect x="702" y="104" width="1" height="1"/><rect x="702" y="107" width="1" height="1"/><rect x="705" y="94" width="1" height="1"/><rect x="705" y="97.5" width="1" height="1"/><rect x="705" y="104" width="1" height="1"/><rect x="705" y="107" width="1" height="1"/><rect x="708" y="94" width="1" height="1"/><rect x="708" y="97.5" width="1" height="1"/><rect x="708" y="104" width="1" height="1"/><rect x="708" y="107" width="1" height="1"/></g>
<path d="M696 102.5 Q699 95 702.5 100 Q706 105 709.5 101" fill="none" stroke="#1a6ae8" stroke-width="1.4"/>
<!-- plane -->
<path d="M695.8 127 L700 118.8 H709.5 L705.3 127 Z" fill="none" stroke="#a85a28" stroke-width="1.3"/>
<!-- axis -->
<path d="M706 137.5 L698.5 151.5" stroke="#a85a28" stroke-width="1.4" stroke-dasharray="3,2"/>
<!-- curve -->
<path d="M695.5 169 Q698.5 162 702 165.5 Q705.5 169 711 161.5" fill="none" stroke="#a85a28" stroke-width="1.3"/>
<!-- points -->
<path d="M700.5 182.5 l3 3 m0 -3 l-3 3 M697 190 l3 3 m0 -3 l-3 3 M705 189.5 l3 3 m0 -3 l-3 3" stroke="#a85a28" stroke-width="1.1"/>
<!-- csys -->
<path d="M697 209 H706 M699.5 203 L706.5 215 M706 203.5 L699.5 215.5" stroke="#a85a28" stroke-width="1.1"/>
<text x="695" y="206" font-family="Liberation Sans" font-size="5.5" fill="#555">y</text>
<text x="695" y="217" font-family="Liberation Sans" font-size="5.5" fill="#555">z</text>
<text x="707" y="211" font-family="Liberation Sans" font-size="5.5" fill="#555">x</text>
<!-- chain -->
<path d="M696.5 238 L700 234.5 M701 232 L705 228 M706.5 226.5 L710 223.5" stroke="#a85a28" stroke-width="1.4"/>
<g fill="none" stroke="#a85a28" stroke-width="1.2">
<rect x="695.5" y="233" width="6" height="3.5" rx="1.7" transform="rotate(-45 698.5 234.7)"/>
<rect x="700" y="228.5" width="6" height="3.5" rx="1.7" transform="rotate(-45 703 230.2)"/>
<rect x="704.5" y="224" width="6" height="3.5" rx="1.7" transform="rotate(-45 707.5 225.7)"/>
</g>
<!-- undo/redo -->
<path d="M697 258 Q698 254.5 703 254.5 Q709.5 254.5 709.5 259 Q709.5 262.5 705 263" fill="none" stroke="#999" stroke-width="1.8"/>
<path d="M695.5 254.5 L699.5 259.5 L695.5 260 Z" fill="#999"/>
<path d="M709.5 280 Q708.5 276.5 703.5 276.5 Q697 276.5 697 281 Q697 284.5 701.5 285" fill="none" stroke="#999" stroke-width="1.8"/>
<path d="M711 276.5 L707 281.5 L711 282 Z" fill="#999"/>
<!-- regen -->
<rect x="696" y="294" width="3" height="3" fill="#60e0e8" stroke="#333" stroke-width="0.6"/>
<rect x="696" y="300" width="3" height="3" fill="#60e0e8" stroke="#333" stroke-width="0.6"/>
<rect x="696" y="306" width="3" height="3" fill="#60e0e8" stroke="#333" stroke-width="0.6"/>
<path d="M702 298 Q704 294 709 296 M710 299 Q708 302.5 703 301" fill="none" stroke="#1a3ad8" stroke-width="1.5"/>
<path d="M708 294 L710.5 296.5 L707.5 297.5 Z M704 299.5 L701.5 301 L704.5 303 Z" fill="#1a3ad8"/>
<path d="M701 305 H709 M701 307.5 H709" stroke="#888" stroke-width="1"/>
<!-- binoculars -->
<path d="M697 321 L699 318 H702 V329 H697 Z M704 318 H707 L709.5 321 V329 H704 Z" fill="#222"/>
<rect x="702" y="320" width="2" height="3" fill="#333"/>
<rect x="697.5" y="325" width="3.5" height="3.5" fill="#ddd"/><rect x="705.5" y="325" width="3.5" height="3.5" fill="#ddd"/>
<!-- select box -->
<rect x="695.5" y="339.5" width="14" height="11" fill="none" stroke="#888" stroke-dasharray="3,2"/>
<!-- col1 dropdowns -->
<path d="M716.5 187 H721.5 L719 189.5 Z M716 343.5 H721.5 L718.8 346.5 Z" fill="#000"/>
<!-- col2 -->
<path d="M731.5 100.5 L735 94.5 H742.5 V101.5 L737 107.5" fill="#f0f4f4" stroke="#555"/>
<path d="M735 94.5 H742.5 V101.5 L735.5 101 Z" fill="#fff" stroke="#666"/>
<rect x="728.5" y="100.5" width="7" height="7" fill="#80f0f0" stroke="#555"/>
<!-- wall -->
<rect x="728.5" y="115.5" width="6" height="10" fill="#90f0f0" stroke="#666" stroke-width="0.7"/>
<rect x="728.5" y="115.5" width="6" height="2.5" fill="#f0f0f0" stroke="#666" stroke-width="0.7"/>
<path d="M733.5 121 H744 L742.5 125 H732 Z" fill="#c8f0c8" stroke="#20a020" stroke-width="1"/>
<rect x="735" y="125" width="7" height="6" fill="#e8ecec"/>
<path d="M735 125 V131.5 M741.5 125 V131.5" stroke="#3a5ac8" stroke-width="1.3"/>
<!-- extrude green -->
<path d="M729.5 140 Q729.5 137.5 732.5 137.5 Q735.5 137.5 735.5 140 V145.5 L743.5 144 V148.5 L733 152 Q729 151.5 729.5 148 Z" fill="#a0eca0" stroke="#1a8a1a" stroke-width="1"/>
<path d="M730 146.5 L735.5 145.5 L743 144.2" stroke="#2040c0" stroke-width="1.1" fill="none"/>
<path d="M733.5 150.5 L743.5 147.5 V150 L735.5 152.5 Z" fill="#b8b8b8" stroke="#777" stroke-width="0.6"/>
<!-- flat wall -->
<path d="M730.5 162.5 L732 160.5 H743.5 L741 168.5 Q740 172.5 736 172.5 H731 Q729.5 172.5 729.5 171 V167.5 H734 L733.5 165 H729.5 Z" fill="#90e8a8" stroke="#1a8a3a" stroke-width="1"/>
<!-- icon5 -->
<path d="M737 182.5 H741 M739.5 181 L741.5 182.5 L739.5 184" fill="none" stroke="#111" stroke-width="1"/>
<path d="M728.5 186.5 H737.5" stroke="#22c022" stroke-width="1.5"/>
<path d="M728.5 188.5 H737.5" stroke="#aaa" stroke-width="1"/>
<path d="M740.5 185 V195" stroke="#20a0c0" stroke-width="1.2" stroke-dasharray="1.5,1"/>
<path d="M742.5 189 V195" stroke="#22c022" stroke-width="1.2"/>
<!-- V icon -->
<rect x="733.5" y="202.5" width="4" height="5" fill="#aaa"/>
<path d="M729 212 V217 H742 V212 L735.5 207.5 Z" fill="#c8c8c8"/>
<path d="M729 204 L735.5 211 L742 204 M729 208 L735.5 215 L742 208" fill="none" stroke="#22c022" stroke-width="1.5"/>
<path d="M729 211.5 V217 M742 211.5 V217" stroke="#2a7a5a" stroke-width="1.2"/>
<!-- T bend -->
<path d="M728.5 236 V232.5 H734.5 V225 H737 V232.5 H743.5 V236 Z" fill="none" stroke="#22c022" stroke-width="1.2"/>
<path d="M738 227 L741.5 230" stroke="#111"/><rect x="741" y="229" width="2" height="2" fill="#111"/>
<!-- icon8 -->
<path d="M728.5 246.5 H735.5 V250 Q737 252 738.5 252 H743.5 V259.5 H728.5 Z" fill="#c4c4c4" stroke="#999"/>
<path d="M728.5 246.5 H735.5 V250 Q737 252 738.5 252 H743.5 V259.5" fill="none" stroke="#22c022" stroke-width="1.3"/>
<!-- icon9 arch -->
<path d="M728.5 274 L733 269 Q735.5 267 738 269 L743 274" fill="none" stroke="#22c022" stroke-width="1.5"/>
<path d="M735.5 278 V272 M733.8 273.7 L735.5 271.5 L737.2 273.7" fill="none" stroke="#111" stroke-width="1"/>
<path d="M728 279 H744" stroke="#30a060" stroke-width="1.2" stroke-dasharray="1,1"/>
<!-- icon10 ghost -->
<g fill="none" stroke="#b4b4b4" stroke-width="1">
<path d="M731.5 288.5 H740 V291.5 H743.5 V300 H740 V303.5 H731.5 V300 H728 V291.5 H731.5 Z"/>
<path d="M731.5 291.5 H740 V300 H731.5 Z M728 291.5 L731.5 295 M743.5 291.5 L740 295"/>
</g>
<!-- col2 dropdowns -->
<path d="M749 166 H754 L751.5 168.5 Z M749 208.5 H754 L751.5 211 Z M749 230.5 H754 L751.5 233 Z M749 252 H754 L751.5 254.5 Z M749 273.5 H754 L751.5 276 Z" fill="#000"/>
</svg>

<div class="t" style="left:23.00px;top:7.27px;font-size:11.5px;line-height:11.5px;color:#000;transform:scaleX(0.7669);">GN10211-01-001</div>
<div class="t" style="left:92.60px;top:7.27px;font-size:11.5px;line-height:11.5px;color:#000;transform:scaleX(0.7524);">Rev:</div>
<div class="t" style="left:112.80px;top:7.27px;font-size:11.5px;line-height:11.5px;color:#000;transform:scaleX(0.8446);">main/W/./10+</div>
<div class="t" style="left:173.40px;top:7.27px;font-size:11.5px;line-height:11.5px;color:#000;transform:scaleX(0.7824);">(Active)</div>
<div class="t" style="left:206.60px;top:7.27px;font-size:11.5px;line-height:11.5px;color:#000;transform:scaleX(0.9106);">-</div>
<div class="t" style="left:213.00px;top:7.27px;font-size:11.5px;line-height:11.5px;color:#000;transform:scaleX(0.7392);">Pro/ENGINEER</div>
<div class="t" style="left:7.00px;top:26.67px;font-size:11.5px;line-height:11.5px;color:#000;transform:scaleX(0.7555);">File</div>
<div class="t" style="left:31.30px;top:26.67px;font-size:11.5px;line-height:11.5px;color:#000;transform:scaleX(0.7565);">Edit</div>
<div class="t" style="left:57.40px;top:26.67px;font-size:11.5px;line-height:11.5px;color:#000;transform:scaleX(0.7686);">View</div>
<div class="t" style="left:87.90px;top:26.67px;font-size:11.5px;line-height:11.5px;color:#000;transform:scaleX(0.7544);">Insert</div>
<div class="t" style="left:120.80px;top:26.67px;font-size:11.5px;line-height:11.5px;color:#000;transform:scaleX(0.7659);">Analysis</div>
<div class="t" style="left:165.00px;top:26.67px;font-size:11.5px;line-height:11.5px;color:#000;transform:scaleX(0.8078);">Info</div>
<div class="t" style="left:192.10px;top:26.67px;font-size:11.5px;line-height:11.5px;color:#000;transform:scaleX(0.8175);">Applications</div>
<div class="t" style="left:253.90px;top:26.67px;font-size:11.5px;line-height:11.5px;color:#000;transform:scaleX(0.7552);">JZtools</div>
<div class="t" style="left:293.20px;top:26.67px;font-size:11.5px;line-height:11.5px;color:#000;transform:scaleX(0.8042);">Tools</div>
<div class="t" style="left:325.70px;top:26.67px;font-size:11.5px;line-height:11.5px;color:#000;transform:scaleX(0.8238);">Window</div>
<div class="t" style="left:370.50px;top:26.67px;font-size:11.5px;line-height:11.5px;color:#000;transform:scaleX(0.8032);">Help</div>
<div class="t" style="left:18.30px;top:114.71px;font-size:10.5px;line-height:10.5px;color:#000;transform:scaleX(0.7881);">Show</div>
<div class="t" style="left:68.90px;top:114.71px;font-size:10.5px;line-height:10.5px;color:#000;transform:scaleX(0.7641);">Settings</div>
<div class="t" style="left:21.00px;top:149.71px;font-size:10.5px;line-height:10.5px;color:#000;transform:scaleX(0.8098);">GN10211-01-001.PRT</div>
<div class="t" style="left:36.80px;top:163.71px;font-size:10.5px;line-height:10.5px;color:#000;transform:scaleX(0.8459);">Group DATUMS</div>
<div class="t" style="left:36.80px;top:177.71px;font-size:10.5px;line-height:10.5px;color:#000;transform:scaleX(0.8517);">WAND</div>
<div class="t" style="left:36.80px;top:191.71px;font-size:10.5px;line-height:10.5px;color:#000;transform:scaleX(0.8362);">Intersect 1</div>
<div class="t" style="left:36.80px;top:205.71px;font-size:10.5px;line-height:10.5px;color:#000;transform:scaleX(0.8565);">Protrusion id 146</div>
<div class="t" style="left:36.80px;top:219.71px;font-size:10.5px;line-height:10.5px;color:#000;transform:scaleX(0.7737);">FIRST WALL</div>
<div class="t" style="left:36.80px;top:233.71px;font-size:10.5px;line-height:10.5px;color:#000;transform:scaleX(0.8006);">UNBEND</div>
<div class="t" style="left:36.80px;top:247.71px;font-size:10.5px;line-height:10.5px;color:#000;transform:scaleX(0.7835);">SCHOEP_VORM</div>
<div class="t" style="left:36.80px;top:261.71px;font-size:10.5px;line-height:10.5px;color:#000;transform:scaleX(0.7860);">BEND_BACK</div>
<div class="t" style="left:36.80px;top:275.41px;font-size:10.5px;line-height:10.5px;color:#000;transform:scaleX(0.7605);">INKORTEN_START</div>
<div class="t" style="left:36.80px;top:289.41px;font-size:10.5px;line-height:10.5px;color:#000;transform:scaleX(0.7729);">INKORTEN_EIND</div>
<div class="t" style="left:36.80px;top:303.41px;font-size:10.5px;line-height:10.5px;color:#000;transform:scaleX(0.7838);">PUBLISH_GEOM_BUITEN</div>
<div class="t" style="left:36.80px;top:317.41px;font-size:10.5px;line-height:10.5px;color:#000;transform:scaleX(0.7915);">REF_AANZICHT</div>
<div class="t" style="left:36.80px;top:331.41px;font-size:10.5px;line-height:10.5px;color:#000;transform:scaleX(0.7657);">SCHOEP_LENGTE</div>
<div class="t" style="left:36.80px;top:345.41px;font-size:10.5px;line-height:10.5px;color:#000;transform:scaleX(0.8375);">Insert Here</div>
<div class="t" style="left:17.50px;top:415.71px;font-size:10.5px;line-height:10.5px;color:#000;transform:scaleX(0.8760);">No object was copied.</div>
<div class="t" style="left:593.60px;top:436.11px;font-size:10.5px;line-height:10.5px;color:#000;transform:scaleX(0.7481);">Features</div>
<div class="t" style="left:252.30px;top:391.26px;font-size:9.5px;line-height:9.5px;color:#8a909c;transform:scaleX(1.0336);-webkit-text-stroke:0.05px #8a909c;">Instance:GN10211-01-001</div>
</body></html>
